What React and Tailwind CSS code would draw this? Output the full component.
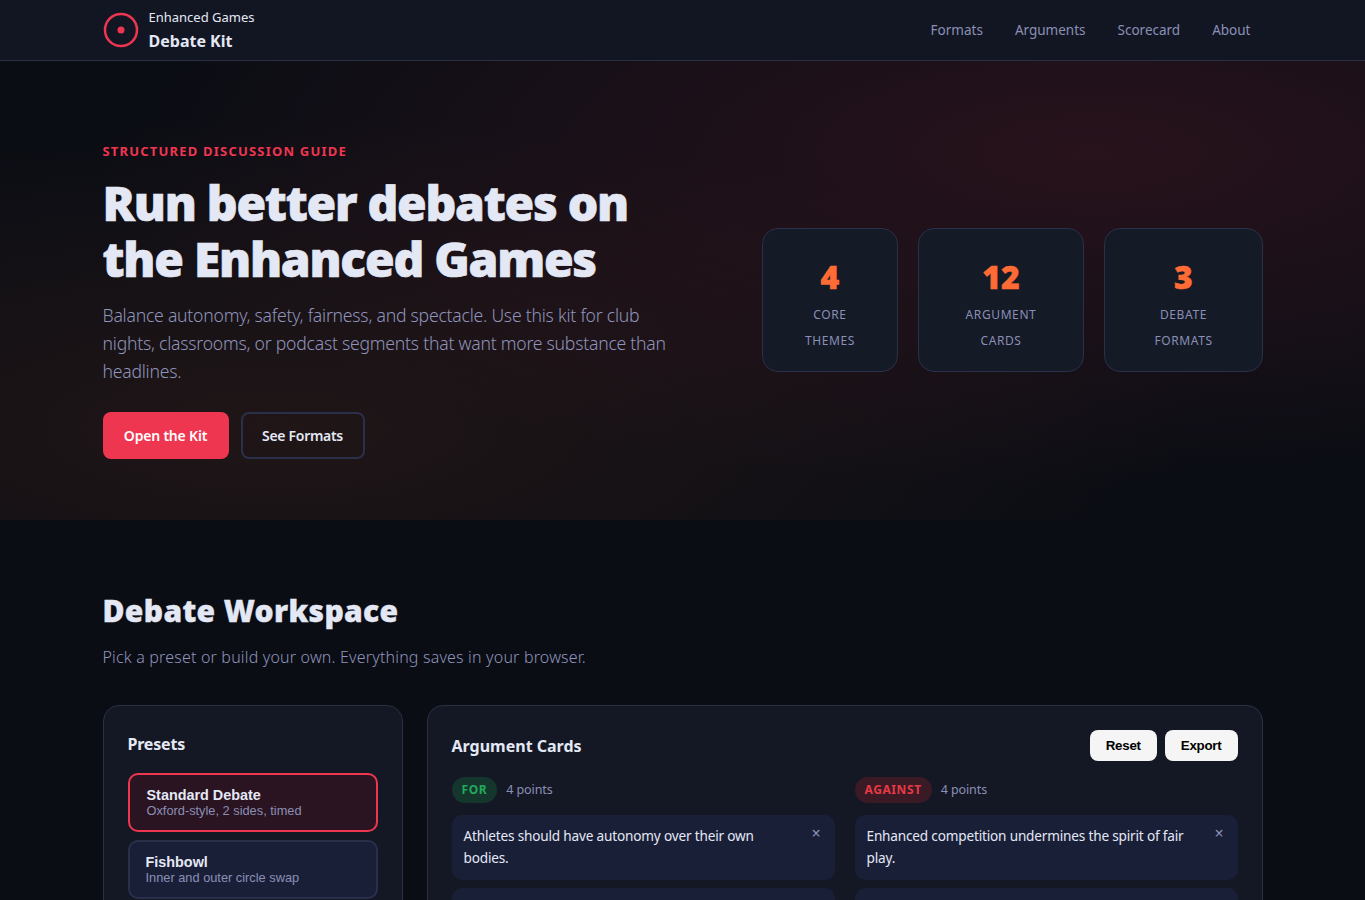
import React from 'react'

const navLinks = ['Formats', 'Arguments', 'Scorecard', 'About']

const stats = [
  { value: '4', top: 'CORE', bottom: 'THEMES', width: 'w-[136px]' },
  { value: '12', top: 'ARGUMENT', bottom: 'CARDS', width: 'w-[166px]' },
  { value: '3', top: 'DEBATE', bottom: 'FORMATS', width: 'w-[159px]' },
]

function Header() {
  return (
    <header className="h-[61px] border-b border-[#2a2f42] bg-[#121622]">
      <div className="mx-auto flex h-[60px] max-w-[1160px] items-center justify-between">
        <div className="flex items-center gap-[10px]">
          <svg width="36" height="36" viewBox="0 0 36 36" fill="none">
            <circle cx="18" cy="18" r="16" stroke="#ef3651" strokeWidth="2.5" />
            <circle cx="18" cy="18" r="3.5" fill="#ef3651" />
          </svg>
          <div className="-mt-[2px]">
            <div className="text-[13px] leading-[24px] text-[#e4e8f5]">Enhanced Games</div>
            <div className="text-[16px] leading-[24px] font-bold text-[#e4e8f5]">Debate Kit</div>
          </div>
        </div>
        <nav className="mr-[12px] flex gap-[32px]">
          {navLinks.map((link) => (
            <a key={link} className="text-[13.5px] text-[#8b8fb5]">{link}</a>
          ))}
        </nav>
      </div>
    </header>
  )
}

function Hero() {
  return (
    <section className="h-[459px] bg-[radial-gradient(ellipse_at_80%_20%,rgba(239,54,81,0.13),transparent_65%),radial-gradient(ellipse_at_20%_80%,rgba(255,107,53,0.09),transparent_60%)] pt-[18px]">
      <div className="mx-auto flex h-full max-w-[1160px] items-center justify-between">
        <div className="w-[580px]">
          <div className="text-[13px] leading-[22px] font-bold tracking-[1.2px] text-[#ef3651]">STRUCTURED DISCUSSION GUIDE</div>
          <h1 className="mt-[13px] text-[48px] leading-[56px] font-black tracking-[-1.25px] text-[#e4e8f5] [-webkit-text-stroke:0.7px_#e4e8f5]">
            Run better debates on the Enhanced Games
          </h1>
          <p className="mt-[14px] text-[17.6px] leading-[28px] font-light tracking-[-0.23px] text-[#9094bb]">
            Balance autonomy, safety, fairness, and spectacle. Use this kit for club nights, classrooms, or podcast segments that want more substance than headlines.
          </p>
          <div className="mt-[27px] flex gap-[12px]">
            <button className="h-[47px] w-[126px] rounded-[8px] bg-[#ef3651] text-[14px] font-semibold tracking-[-0.2px] text-white">Open the Kit</button>
            <button className="h-[47px] w-[124px] rounded-[8px] border-2 border-[#2a2f4a] text-[14px] font-semibold tracking-[-0.3px] text-[#e4e8f5]">See Formats</button>
          </div>
        </div>
        <div className="flex gap-[20px]">
          {stats.map((s) => (
            <div key={s.top} className={`${s.width} h-[144px] rounded-[16px] border border-[#2a2f4a] bg-[#141a26] pt-[24px] pl-[1px] text-center`}>
              <div className="text-[32px] leading-[48px] font-black text-[#ff6b35] [-webkit-text-stroke:0.5px_#ff6b35]">{s.value}</div>
              <div className="mt-[1px] text-[12px] leading-[26px] tracking-[0.6px] text-[#8b8fb5]">{s.top}<br />{s.bottom}</div>
            </div>
          ))}
        </div>
      </div>
    </section>
  )
}

function ArgumentColumn({ label, badge, card }) {
  return (
    <div>
      <div className="flex items-center gap-[9px]">
        <span className={`rounded-full px-[10px] py-[4px] text-[12px] leading-[18px] font-bold tracking-[0.6px] ${badge}`}>{label}</span>
        <span className="text-[12.5px] tracking-[-0.1px] text-[#8b8fb5]">4 points</span>
      </div>
      <div className="relative mt-[12px] h-[65px] rounded-[10px] bg-[#1a1f38] py-[10px] pr-[40px] pl-[12px] text-[13.6px] leading-[22px] tracking-[-0.18px] text-[#e4e8f5]">
        {card}
        <span className="absolute top-[7px] right-[14px] text-[16px] text-[#8b8fb5]">×</span>
      </div>
      <div className="mt-[8px] h-[65px] rounded-[10px] bg-[#1a1f38]" />
    </div>
  )
}

function Workspace() {
  return (
    <section className="mx-auto max-w-[1160px] pt-[69px]">
      <h2 className="text-[30px] leading-[44px] font-black tracking-[0.35px] text-[#e4e8f5] [-webkit-text-stroke:0.4px_#e4e8f5]">Debate Workspace</h2>
      <p className="mt-[11px] text-[16px] leading-[26px] font-light tracking-[0.18px] text-[#9094bb]">Pick a preset or build your own. Everything saves in your browser.</p>
      <div className="mt-[35px] flex gap-[24px]">
        <div className="h-[300px] w-[300px] shrink-0 rounded-[16px] border border-[#2a2f42] bg-[#141824] p-[24px]">
          <h3 className="text-[16px] leading-[28px] font-bold tracking-[-0.2px] text-[#e4e8f5]">Presets</h3>
          <button className="mt-[15px] block h-[59px] w-full rounded-[10px] border-2 border-[#ef3651] bg-[#2a1422] px-[17px] text-left font-['Liberation_Sans',sans-serif]">
            <div className="text-[14.4px] leading-[16px] font-bold text-[#e4e8f5]">Standard Debate</div>
            <div className="text-[12.8px] leading-[16px] text-[#8b8fb5]">Oxford-style, 2 sides, timed</div>
          </button>
          <button className="mt-[8px] block h-[59px] w-full rounded-[10px] border-2 border-[#2a2f4a] bg-[#1a1f38] px-[16px] text-left font-['Liberation_Sans',sans-serif]">
            <div className="text-[14.4px] leading-[16px] font-bold text-[#e4e8f5]">Fishbowl</div>
            <div className="text-[12.8px] leading-[16px] text-[#8b8fb5]">Inner and outer circle swap</div>
          </button>
        </div>
        <div className="h-[300px] flex-1 rounded-[16px] border border-[#2a2f42] bg-[#141824] p-[24px]">
          <div className="flex items-center justify-between">
            <h3 className="text-[16px] font-bold text-[#e4e8f5]">Argument Cards</h3>
            <div className="flex gap-[8px] font-['Liberation_Sans',sans-serif] text-[13.33px] font-bold tracking-[-0.25px] text-black">
              <button className="h-[31px] rounded-[8px] bg-[#f5f5f5] px-[16px]">Reset</button>
              <button className="h-[31px] rounded-[8px] bg-[#f5f5f5] px-[16px]">Export</button>
            </div>
          </div>
          <div className="mt-[16px] grid grid-cols-2 gap-[20px]">
            <ArgumentColumn label="FOR" badge="bg-[#14362c] text-[#22a85a]" card="Athletes should have autonomy over their own bodies." />
            <ArgumentColumn label="AGAINST" badge="bg-[#3a1a24] text-[#e63946]" card="Enhanced competition undermines the spirit of fair play." />
          </div>
        </div>
      </div>
    </section>
  )
}

export default function App() {
  return (
    <div className="h-[900px] overflow-hidden bg-[#0a0d14] font-['Noto_Sans',sans-serif]">
      <Header />
      <Hero />
      <Workspace />
    </div>
  )
}
